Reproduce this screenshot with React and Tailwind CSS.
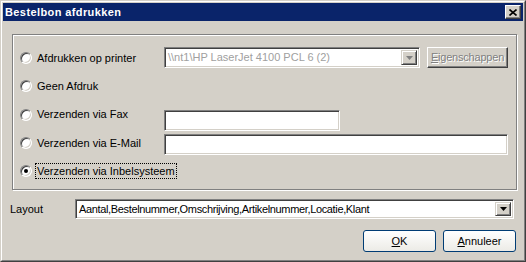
import React from "react";

const font = { fontFamily: '"Liberation Sans", Arial, sans-serif' };

function Radio({ checked }) {
  return (
    <div className="relative w-[12px] h-[12px] rounded-full border border-t-[#808080] border-l-[#808080] border-b-white border-r-white bg-white shadow-[inset_1px_1px_0_#404040,inset_-1px_-1px_0_#d4d0c8] flex items-center justify-center shrink-0">
      {checked && <div className="w-[4px] h-[4px] rounded-full bg-black" />}
    </div>
  );
}

function RadioRow({ label, checked, focus, h }) {
  return (
    <div className={`flex items-center whitespace-nowrap ${h}`}>
      <Radio checked={checked} />
      <div
        className={`ml-[3px] h-[16px] flex items-center px-[1px] ${
          focus ? "border border-dotted border-black" : "border border-transparent"
        }`}
      >
        {label}
      </div>
    </div>
  );
}

function Arrow({ color }) {
  return (
    <svg width="7" height="4" viewBox="0 0 7 4">
      <path d="M0 0H7L3.5 4Z" fill={color} />
    </svg>
  );
}

function DropBtn({ disabled }) {
  return (
    <div className="w-[16px] h-full shrink-0 border border-t-[#d4d0c8] border-l-[#d4d0c8] border-b-[#404040] border-r-[#404040] bg-[#d4d0c8] shadow-[inset_1px_1px_0_#fff,inset_-1px_-1px_0_#808080] flex items-center justify-center">
      <Arrow color={disabled ? "#808080" : "#000"} />
    </div>
  );
}

const sunken =
  "border border-t-[#808080] border-l-[#808080] border-b-white border-r-white shadow-[inset_1px_1px_0_#404040,inset_-1px_-1px_0_#d4d0c8] bg-white";

export default function App() {
  return (
    <div
      className="w-[526px] h-[262px] bg-[#d4d0c8] border border-t-[#d4d0c8] border-l-[#d4d0c8] border-r-[#404040] border-b-[#404040] text-[11px] text-black overflow-hidden"
      style={font}
    >
      <div className="h-full border border-t-white border-l-white border-r-[#808080] border-b-[#808080] p-px flex flex-col">
        {/* title bar */}
        <div className="h-[18px] bg-[#0a246a] flex items-center justify-between pl-[2px] pr-[2px] shrink-0">
          <span className="text-white font-bold text-[11px] leading-none tracking-[0.4px]">Bestelbon afdrukken</span>
          <div className="w-[16px] h-[14px] bg-[#d4d0c8] border border-t-white border-l-white border-b-[#404040] border-r-[#404040] shadow-[inset_-1px_-1px_0_#808080] flex items-center justify-center">
            <svg width="8" height="7" viewBox="0 0 8 7">
              <path d="M0.5 0.5L7.5 6.5M7.5 0.5L0.5 6.5" stroke="#000" strokeWidth="1.6" />
            </svg>
          </div>
        </div>

        <div className="flex flex-col px-[7px] pt-[13px]">
          {/* group box */}
          <div className="ml-[2px] w-[505px] h-[156px] border border-[#808080] shadow-[1px_1px_0_#fff,inset_1px_1px_0_#fff] flex pl-[7px]">
            <div className="w-[144px] shrink-0 pt-[9px] flex flex-col">
              <RadioRow h="h-[28px]" label="Afdrukken op printer" />
              <RadioRow h="h-[28px]" label="Geen Afdruk" />
              <RadioRow h="h-[29px]" label="Verzenden via Fax" />
              <RadioRow h="h-[28px]" label="Verzenden via E-Mail" />
              <RadioRow h="h-[28px]" label="Verzenden via Inbelsysteem" checked focus />
            </div>
            <div className="pt-[12px] flex flex-col">
              <div className="flex h-[21px]">
                <div className={`w-[256px] h-full ${sunken} flex items-stretch p-[2px]`}>
                  <div className="flex-1 flex items-center pl-[1px] text-[#a0a0a0] whitespace-nowrap">
                    \\nt1\HP LaserJet 4100 PCL 6 (2)
                  </div>
                  <DropBtn disabled />
                </div>
                <div className="ml-[7px] w-[81px] h-[21px] bg-[#d4d0c8] border border-t-white border-l-white border-b-[#404040] border-r-[#404040] shadow-[inset_-1px_-1px_0_#808080] flex items-center justify-center text-[#808080] tracking-[-0.2px] [text-shadow:1px_1px_0_#fff]">
                  <span>
                    <span className="underline">E</span>igenschappen
                  </span>
                </div>
              </div>
              <div className={`mt-[42px] w-[176px] h-[21px] ${sunken}`} />
              <div className={`mt-[3px] w-[344px] h-[21px] ${sunken}`} />
            </div>
          </div>

          {/* layout row */}
          <div className="mt-[9px] flex items-center h-[20px]">
            <div className="w-[65px]">Layout</div>
            <div className={`w-[439px] h-[20px] ${sunken} flex items-stretch p-[2px]`}>
              <div className="flex-1 flex items-center pl-[1px] whitespace-nowrap tracking-[-0.35px]">
                Aantal,Bestelnummer,Omschrijving,Artikelnummer,Locatie,Klant
              </div>
              <DropBtn />
            </div>
          </div>

          {/* buttons */}
          <div className="mt-[11px] flex justify-end gap-[7px]">
            <div className="w-[73px] h-[22px] rounded-[3px] border border-[#003c74] bg-gradient-to-b from-white to-[#ecebe6] flex items-center justify-center">
              <span>
                <span className="underline">O</span>K
              </span>
            </div>
            <div className="w-[73px] h-[22px] rounded-[3px] border border-[#003c74] bg-gradient-to-b from-white to-[#ecebe6] flex items-center justify-center">
              <span>
                <span className="underline">A</span>nnuleer
              </span>
            </div>
          </div>
        </div>
      </div>
    </div>
  );
}
